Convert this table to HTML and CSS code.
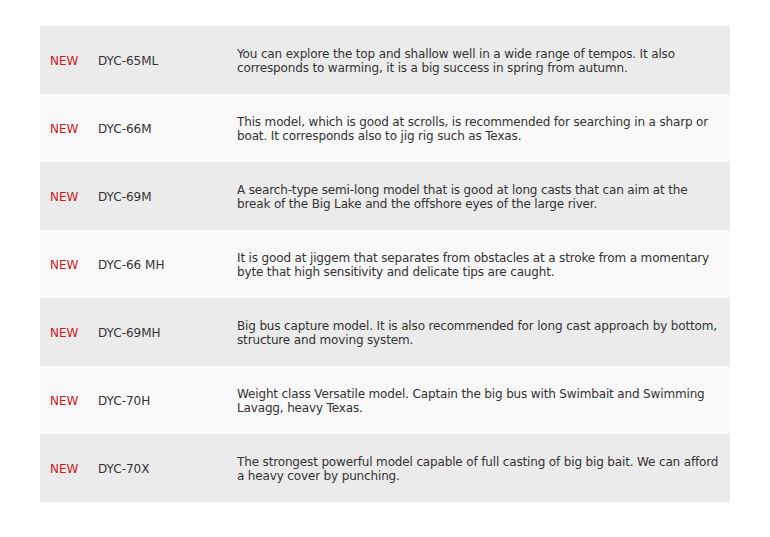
FILE: index.html
```html
<!DOCTYPE html>
<html>
<head>
<meta charset="utf-8">
<link rel="stylesheet" href="styles.css">
</head>
<body>
<table class="lineup">
<tbody>
<tr class="row-odd"><td class="tag">NEW</td><td class="model">DYC-65ML</td><td class="desc">You can explore the top and shallow well in a wide range of tempos. It also<br>corresponds to warming, it is a big success in spring from autumn.</td></tr>
<tr class="row-even"><td class="tag">NEW</td><td class="model">DYC-66M</td><td class="desc">This model, which is good at scrolls, is recommended for searching in a sharp or<br>boat. It corresponds also to jig rig such as Texas.</td></tr>
<tr class="row-odd"><td class="tag">NEW</td><td class="model">DYC-69M</td><td class="desc">A search-type semi-long model that is good at long casts that can aim at the<br>break of the Big Lake and the offshore eyes of the large river.</td></tr>
<tr class="row-even"><td class="tag">NEW</td><td class="model">DYC-66 MH</td><td class="desc">It is good at jiggem that separates from obstacles at a stroke from a momentary<br>byte that high sensitivity and delicate tips are caught.</td></tr>
<tr class="row-odd"><td class="tag">NEW</td><td class="model">DYC-69MH</td><td class="desc">Big bus capture model. It is also recommended for long cast approach by bottom,<br>structure and moving system.</td></tr>
<tr class="row-even"><td class="tag">NEW</td><td class="model">DYC-70H</td><td class="desc">Weight class Versatile model. Captain the big bus with Swimbait and Swimming<br>Lavagg, heavy Texas.</td></tr>
<tr class="row-odd"><td class="tag">NEW</td><td class="model">DYC-70X</td><td class="desc">The strongest powerful model capable of full casting of big big bait. We can afford<br>a heavy cover by punching.</td></tr>
</tbody>
</table>
</body>
</html>
```
FILE: styles.css
```css
html, body {
  margin: 0;
  padding: 0;
  background: #ffffff;
}
body {
  padding: 26px 40px 0 40px;
  font-family: "DejaVu Sans", Verdana, sans-serif;
  font-size: 12px;
  color: #333333;
}
.lineup {
  width: 690px;
  border-collapse: collapse;
  border-spacing: 0;
}
.lineup td {
  height: 68px;
  padding: 2px 0 0 0;
  vertical-align: middle;
  line-height: 14px;
  box-sizing: border-box;
}
.row-odd { background: #ebebeb; }
.row-even { background: #f8f8f8; }
.lineup .tag {
  width: 58px;
  padding-left: 10px;
  color: #cc1a1a;
}
.model {
  width: 139px;
}
.desc {
  white-space: nowrap;
  letter-spacing: -0.15px;
}
```
